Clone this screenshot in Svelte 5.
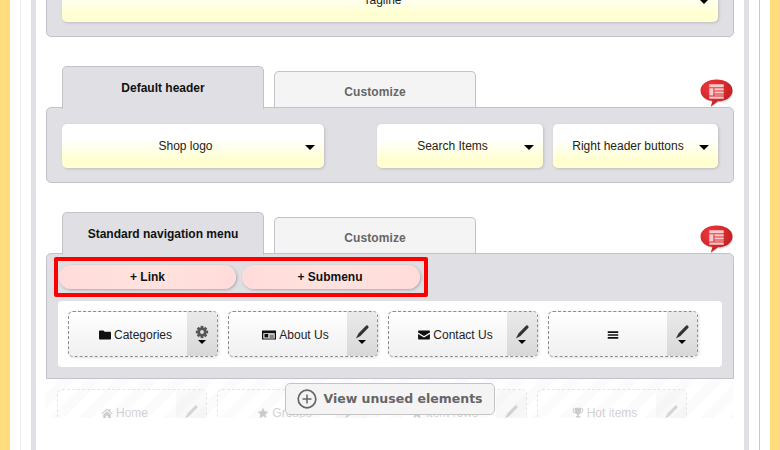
<script>
  const navItems = [
    { label: 'Categories', icon: 'folder', tool: 'cog' },
    { label: 'About Us', icon: 'card', tool: 'pencil' },
    { label: 'Contact Us', icon: 'mail', tool: 'pencil' },
    { label: '', icon: 'bars', tool: 'pencil' }
  ]
  const unused = [
    { label: 'Home', icon: 'home' },
    { label: 'Groups', icon: 'star' },
    { label: 'Item rows', icon: 'star' },
    { label: 'Hot items', icon: 'trophy' }
  ]
  const teeth = [0, 45, 90, 135, 180, 225, 270, 315]
</script>

{#snippet icon(name)}
  <svg class="ico {name}" viewBox="0 0 16 16" aria-hidden="true" preserveAspectRatio="none">
    {#if name === 'folder'}
      <path d="M0 3.500C0 2.600.7 2 1.500 2H6l1.500 1.800h7c.8 0 1.500.7 1.500 1.500v7.200c0 .8-.7 1.500-1.500 1.500h-13C.7 14 0 13.300 0 12.500z" />
    {:else if name === 'card'}
      <path fill-rule="evenodd" d="M0 2h16v12H0zM1.500 5.500v7h13v-7zM2.800 6.800h4.400v4.400H2.800zM8.500 7.500H13.500v1.200H8.500zM8.500 10H13.500v1.200H8.500z" />
    {:else if name === 'mail'}
      <path d="M1 2h14c.5 0 .9.400.9 1v1.600L8 9.400.1 4.600V3c0-.6.400-1 .9-1zM.1 6.500 8 11.300l7.900-4.800V13c0 .6-.4 1-.9 1H1c-.5 0-.9-.4-.9-1z" />
    {:else if name === 'bars'}
      <path d="M1 3h14v2.200H1zM1 6.900h14v2.200H1zM1 10.800h14V13H1z" />
    {:else if name === 'home'}
      <path d="M8 2 .5 8.500l1 1L8 4l6.500 5.500 1-1L12.500 6V2.500h-2v1.800zM3 10v5h3.500v-3.500h3V15H13v-5L8 5.500z" />
    {:else if name === 'star'}
      <path d="m8 1 2.200 4.700 5.100.6-3.800 3.500 1 5.100L8 12.400l-4.500 2.500 1-5.100L.7 6.300l5.100-.6z" />
    {:else if name === 'trophy'}
      <path d="M4 1h8v1h3v2.500c0 2-1.500 3.500-3.600 3.700C10.800 9.300 9.900 10 9 10.300V12h2v2H5v-2h2v-1.700C6.100 10 5.200 9.300 4.600 8.200 2.500 8 1 6.500 1 4.500V2h3zM2.300 3.200v1.300c0 1.100.7 2 1.900 2.300-.2-1-.2-2.300-.2-3.600zm11.400 0H12c0 1.300 0 2.600-.2 3.600 1.200-.3 1.900-1.200 1.900-2.300z" />
    {/if}
  </svg>
{/snippet}

{#snippet tool(name)}
  <svg class="tool-ico" viewBox="0 0 16 16" aria-hidden="true">
    {#if name === 'cog'}
      <g fill="#555">
        {#each teeth as a}
          <rect x="6.400" y="1" width="3.200" height="3.500" transform="rotate({a} 8 8)" />
        {/each}
        <path fill-rule="evenodd" d="M8 2.800a5.200 5.200 0 1 1 0 10.400A5.200 5.200 0 0 1 8 2.800zm0 3a2.200 2.200 0 1 0 0 4.400 2.200 2.200 0 0 0 0-4.400z" />
      </g>
    {:else}
      <path d="M12.800.7c.6-.5 1.200-.4 1.700.1l.7.7c.5.5.6 1.100.1 1.700L6.200 12.600 1 15.500l2.900-5.900z" />
    {/if}
  </svg>
{/snippet}

{#snippet bubble()}
  <svg class="bubble" viewBox="0 0 32 28" aria-hidden="true">
    <defs>
      <radialGradient id="red" cx="35%" cy="30%" r="80%">
        <stop offset="0" stop-color="#f5383c" />
        <stop offset="1" stop-color="#b81c20" />
      </radialGradient>
    </defs>
    <path d="M16 1c8.500 0 15.500 3.900 15.500 10.500S25 22 17.500 22l-8 5 2.500-5.300C6 21 .5 17.500.5 11.500S7.500 1 16 1z" fill="#bbb" transform="translate(.6 .8)" opacity=".5" />
    <path d="M16 .5c8.500 0 15.500 4 15.500 10.500S25 21.500 17.500 21.500l-7 5 1.500-5.300C6 20.500.5 17 .5 11S7.500.5 16 .5z" fill="url(#red)" />
    <path d="M9 5h14v3H9zM9 9h4v7H9zM14 9h9v2h-9zM14 12h9v2h-9zM14 15h9v1h-9zM9 17h14v2H9z" fill="#fff" opacity=".75" />
  </svg>
{/snippet}

<div class="shell">
  <div class="rail">
    <div class="frame">
      <section class="panel top-panel">
        <div class="select wide"><span class="select-label">Tagline</span><i class="caret"></i></div>
      </section>

      <section class="block">
        <div class="tabs">
          <div class="tab active">Default header</div>
          <div class="tab">Customize</div>
          {@render bubble()}
        </div>
        <div class="panel header-row">
          <div class="select logo"><span class="select-label">Shop logo</span><i class="caret"></i></div>
          <div class="select-group">
            <div class="select search"><span class="select-label">Search Items</span><i class="caret"></i></div>
            <div class="select buttons"><span class="select-label">Right header buttons</span><i class="caret"></i></div>
          </div>
        </div>
      </section>

      <section class="block">
        <div class="tabs">
          <div class="tab active">Standard navigation menu</div>
          <div class="tab">Customize</div>
          {@render bubble()}
        </div>
        <div class="panel nav-panel">
          <div class="add-box">
            <button class="pill">+ Link</button>
            <button class="pill">+ Submenu</button>
          </div>
          <div class="nav-list">
            {#each navItems as item}
              <div class="nav-item">
                <span class="nav-label" class:only-icon={!item.label}>{@render icon(item.icon)}{#if item.label}<span>{item.label}</span>{/if}</span>
                <span class="handle">{@render tool(item.tool)}<i class="caret small"></i></span>
              </div>
            {/each}
          </div>
        </div>
        <div class="unused">
          <div class="unused-list">
            {#each unused as item}
              <div class="nav-item ghost">
                <span class="nav-label">{@render icon(item.icon)}<span>{item.label}</span></span>
                <span class="handle">{@render tool('pencil')}</span>
              </div>
            {/each}
          </div>
          <button class="view-btn">
            <svg viewBox="0 0 20 20" aria-hidden="true">
              <circle cx="10" cy="10" r="8.800" fill="none" stroke="#666" stroke-width="1.700" />
              <path d="M5.500 10h9M10 5.500v9" stroke="#666" stroke-width="1.500" />
            </svg>
            <span class="view-text">View unused elements</span>
          </button>
        </div>
      </section>
    </div>
  </div>
</div>

<style>
  :global(body) {
    margin: 0;
    background: #fff;
  }
  .shell {
    box-sizing: border-box;
    height: 450px;
    overflow: hidden;
    border-inline: 10px solid #ffdd7c;
    background: #fff;
    font-family: 'Liberation Sans', Arial, sans-serif;
    font-size: 12px;
    color: #222;
  }
  .rail {
    height: 100%;
    box-sizing: border-box;
    margin: 0 10px;
    padding: 0 10px;
    border-left: 1px solid #ececec;
    border-right: 1px solid #c8c8c8;
  }
  .frame {
    display: flow-root;
    height: 100%;
    box-sizing: border-box;
    padding: 0 10px;
    border-inline: 5px solid #e0dfe4;
  }
  .panel {
    position: relative;
    border: 1px solid #c2c2c8;
    border-radius: 5px;
    background: #e0dfe4;
  }
  .top-panel {
    margin-top: -30px;
    height: 67px;
    padding: 7px 15px 0;
    box-sizing: border-box;
  }
  .block {
    margin-top: 29px;
  }
  .tabs {
    display: flex;
    align-items: flex-end;
    gap: 10px;
    height: 42px;
    padding-left: 16px;
    position: relative;
  }
  .tab {
    box-sizing: border-box;
    width: 202px;
    height: 37px;
    display: flex;
    align-items: center;
    justify-content: center;
    border: 1px solid #c2c2c8;
    border-bottom: 0;
    border-radius: 5px 5px 0 0;
    background: #f4f4f4;
    color: #666;
    font-weight: bold;
    font-size: 12px;
    letter-spacing: .1px;
    padding-top: 3px;
  }
  .tab.active {
    background: #e0dfe4;
    color: #111;
    letter-spacing: 0;
    position: relative;
    z-index: 2;
    margin-bottom: -1px;
    height: 43px;
    padding-top: 0;
    padding-bottom: 1px;
  }
  .bubble {
    position: absolute;
    right: 1px;
    top: 13px;
    width: 33px;
    height: 29px;
  }
  .header-row {
    display: flex;
    justify-content: space-between;
    padding: 16px 15px 14px;
    margin-top: -1px;
  }
  .select-group {
    display: flex;
    gap: 10px;
  }
  .select {
    box-sizing: border-box;
    height: 44px;
    display: flex;
    align-items: center;
    border-radius: 5px;
    background: linear-gradient(#fff 35%, #ffffd2 80%);
    box-shadow: 1px 1px 3px rgba(0, 0, 0, .16);
  }
  .select.wide { width: 656px; }
  .select.logo { width: 262px; }
  .select.search { width: 166px; }
  .select.buttons { width: 165px; }
  .select-label {
    flex: 1;
    text-align: center;
    padding-left: 4px;
  }
  .caret {
    width: 0;
    height: 0;
    margin: 3px 9px 0 0;
    border-left: 5px solid transparent;
    border-right: 5px solid transparent;
    border-top: 5px solid #000;
  }
  .caret.small {
    margin: 0;
    border-left-width: 4px;
    border-right-width: 4px;
    border-top-width: 4px;
  }
  .nav-panel {
    margin-top: -1px;
    padding: 3px 11px 11px;
    border-radius: 5px 5px 0 0;
  }
  .add-box {
    box-sizing: border-box;
    width: 374px;
    height: 40px;
    margin-left: -4px;
    display: flex;
    align-items: center;
    gap: 6px;
    padding-left: 1px;
    border: 4px solid #f00;
    border-radius: 2px;
  }
  .pill {
    width: 177px;
    height: 24px;
    padding: 0;
    border: 0;
    border-radius: 12px;
    background: linear-gradient(90deg, #ffdcd9, #ffe2df 50%, #ffdcd9);
    box-shadow: 1px 1px 3px rgba(0, 0, 0, .25);
    font: bold 12px 'Liberation Sans', Arial, sans-serif;
    color: #111;
  }
  .pill + .pill {
    width: 178px;
    padding-right: 2px;
  }
  .nav-list {
    display: flex;
    gap: 10px;
    height: 66px;
    box-sizing: border-box;
    margin-top: 4px;
    padding: 10px;
    border-radius: 4px;
    background: #fff;
  }
  .nav-item {
    box-sizing: border-box;
    width: 150px;
    height: 46px;
    display: flex;
    border: 1px dashed #8d8d8d;
    border-radius: 5px;
    background: linear-gradient(#fff, #f0f0f0);
    box-shadow: 1px 1px 3px rgba(0, 0, 0, .12);
  }
  .nav-label {
    flex: 1;
    display: flex;
    align-items: center;
    justify-content: center;
    gap: 3px;
    padding: 2px 0 0 15px;
    color: #222;
  }
  .nav-label.only-icon { padding-left: 9px; }
  .ico {
    width: 12px;
    height: 12px;
    fill: #111;
  }
  .ico.card { width: 14px; }
  .handle {
    width: 30px;
    display: flex;
    flex-direction: column;
    align-items: center;
    justify-content: center;
    background: linear-gradient(#eaeaea, #d8d8d8);
    border-radius: 0 4px 4px 0;
  }
  .tool-ico {
    width: 14px;
    height: 14px;
    fill: #333;
  }
  .handle .caret { margin-top: 1px; }
  .unused {
    position: relative;
    height: 39px;
    overflow: hidden;
    background: repeating-linear-gradient(135deg, #fff 0 10px, #fbfbfb 10px 20px);
  }
  .unused-list {
    display: flex;
    gap: 10px;
    padding: 10px 0 0 11px;
    opacity: .2;
  }
  .ghost {
    flex: none;
    background: #fff;
    box-shadow: none;
  }
  .view-btn {
    position: absolute;
    left: 239px;
    top: 4px;
    box-sizing: border-box;
    width: 210px;
    height: 32px;
    display: flex;
    align-items: center;
    justify-content: center;
    gap: 6px;
    border: 1px solid #c4c4c4;
    border-radius: 5px;
    background: #f4f4f4;
    font: bold 12.500px 'DejaVu Sans', Verdana, sans-serif;
    color: #666;
    padding: 0;
  }
  .view-text {
    margin-top: -2px;
  }
  .view-btn svg {
    width: 20px;
    height: 20px;
  }
</style>
